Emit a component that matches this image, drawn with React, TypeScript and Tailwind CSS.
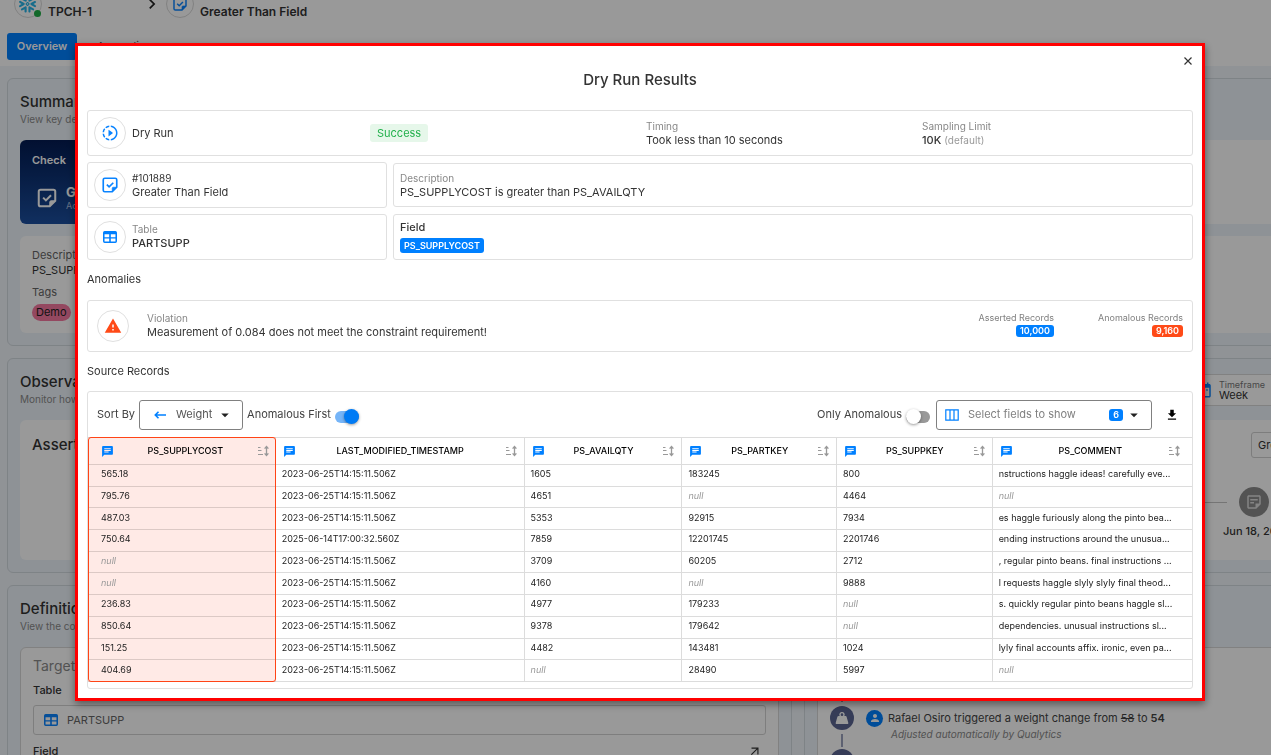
import type { ReactNode } from "react";
import {
  MdArrowDropDown,
  MdArrowOutward,
  MdChat,
  MdChevronRight,
  MdDateRange,
  MdDownload,
  MdOutlineStickyNote2,
  MdPerson,
  MdSlowMotionVideo,
  MdWarning,
} from "react-icons/md";
import { SiSnowflake } from "react-icons/si";

const columns = [
  { name: "PS_SUPPLYCOST", width: "w-[17%]" },
  { name: "LAST_MODIFIED_TIMESTAMP", width: "w-[22.5%]" },
  { name: "PS_AVAILQTY", width: "w-[14.3%]" },
  { name: "PS_PARTKEY", width: "w-[14%]" },
  { name: "PS_SUPPKEY", width: "w-[14.1%]" },
  { name: "PS_COMMENT", width: "" },
];

const stamp = "2023-06-25T14:15:11.506Z";

const rows: (string | null)[][] = [
  ["565.18", stamp, "1605", "183245", "800", "nstructions haggle ideas! carefully eve..."],
  ["795.76", stamp, "4651", null, "4464", null],
  ["487.03", stamp, "5353", "92915", "7934", "es haggle furiously along the pinto bea..."],
  ["750.64", "2025-06-14T17:00:32.560Z", "7859", "12201745", "2201746", "ending instructions around the unusua..."],
  [null, stamp, "3709", "60205", "2712", ", regular pinto beans. final instructions ..."],
  [null, stamp, "4160", null, "9888", "l requests haggle slyly slyly final theod..."],
  ["236.83", stamp, "4977", "179233", null, "s. quickly regular pinto beans haggle sl..."],
  ["850.64", stamp, "9378", "179642", null, "dependencies. unusual instructions sl..."],
  ["151.25", stamp, "4482", "143481", "1024", "lyly final accounts affix. ironic, even pa..."],
  ["404.69", stamp, null, "28490", "5997", null],
];

function NoteCheckIcon({ className }: { className: string }) {
  return (
    <svg viewBox="0 0 24 24" className={className} fill="none" stroke="currentColor" strokeWidth="2.2" aria-hidden="true">
      <path d="M15 21H5a2 2 0 0 1-2-2V5a2 2 0 0 1 2-2h14a2 2 0 0 1 2 2v10z" />
      <path d="M21 15h-4.5a1.5 1.5 0 0 0-1.5 1.5V21z" fill="currentColor" strokeWidth="1" />
      <path d="M7.8 11.6l3 3 5.6-5.6" />
    </svg>
  );
}

function TableIcon({ className }: { className: string }) {
  return (
    <svg viewBox="0 0 24 24" className={className} fill="currentColor" aria-hidden="true">
      <path
        fillRule="evenodd"
        d="M4 3h16a2.500 2.500 0 0 1 2.500 2.500v13A2.500 2.500 0 0 1 20 21H4a2.500 2.500 0 0 1-2.500-2.500v-13A2.500 2.500 0 0 1 4 3zM3.800 8v4.200h7V8zm9.400 0v4.200h7V8zm-9.400 6.400v4.200h7v-4.200zm9.400 0v4.200h7v-4.200z"
      />
    </svg>
  );
}

function SortIcon() {
  return (
    <svg viewBox="0 0 12 12" className="size-3" fill="none" stroke="currentColor" strokeWidth="1" aria-hidden="true">
      <path d="M1 2.500h2.500M1 5.500h3.500M1 9.500h5" strokeWidth="1.200" />
      <path d="M9.500 2v8M7.600 3.600L9.500 1.500l1.900 2.100M7.600 8.400l1.900 2.100 1.900-2.100" strokeWidth="1.300" />
    </svg>
  );
}

function ColumnsIcon() {
  return (
    <svg viewBox="0 0 14 12" className="h-3 w-3.5 shrink-0 text-[#0080ff]" fill="none" stroke="currentColor" strokeWidth="1.2" aria-hidden="true">
      <path d="M.8.8h12.4v10.4H.8zM5 .8v10.4M9 .8v10.4" />
    </svg>
  );
}

function WeightIcon({ className }: { className: string }) {
  return (
    <svg viewBox="0 0 24 24" className={className} fill="currentColor" aria-hidden="true">
      <path
        fillRule="evenodd"
        d="M12 3a4 4 0 0 1 3.500 6H17c1 0 1.800.6 2 1.500l2.400 8.500c.4 1.200-.4 2-1.400 2H4c-1 0-1.800-.8-1.400-2L5 10.500C5.200 9.600 6 9 7 9h1.500A4 4 0 0 1 12 3zm0 2a2 2 0 1 0 0 4 2 2 0 0 0 0-4z"
      />
    </svg>
  );
}

function RoundIcon({ children }: { children: ReactNode }) {
  return (
    <span className="flex size-8 shrink-0 items-center justify-center rounded-full border border-[#e0e0e0] bg-white">
      {children}
    </span>
  );
}

function Card({ className, children }: { className: string; children: ReactNode }) {
  return <div className={`rounded-[3px] border border-[#e0e0e0] ${className}`}>{children}</div>;
}

function Labelled({ label, children }: { label: string; children: ReactNode }) {
  return (
    <div className="flex flex-col">
      <span className="text-[10px] leading-[14px] text-[#888]">{label}</span>
      <span className="text-[11px] leading-[14px] text-[#333]">{children}</span>
    </div>
  );
}

function Toggle({ id, label, on }: { id: string; label: string; on?: boolean }) {
  return (
    <div className="flex items-center gap-1">
      <label htmlFor={id} className="text-[11px] text-[#424242]">{label}</label>
      <input
        id={id}
        type="checkbox"
        defaultChecked={on}
        className="relative mt-1 h-4 w-6 appearance-none before:absolute before:inset-x-0 before:top-0.5 before:h-3 before:rounded-full before:bg-[#999] after:absolute after:top-0 after:left-0 after:size-[15px] after:rounded-full after:bg-white after:shadow-[0_1px_3px_rgba(0,0,0,0.4)] checked:before:bg-[#76b5f8] checked:after:left-[9px] checked:after:bg-[#007bf5]"
      />
    </div>
  );
}

function BackPanel({ title, hint, children, aside }: { title?: string; hint?: string; children: ReactNode; aside?: ReactNode }) {
  return (
    <section className="rounded-md border border-[#d3dae0] bg-[#edf4fa] px-3 pb-3">
      <div className="flex h-[61px] items-center justify-between">
        <div>
          {title && <h2 className="text-[15px] leading-[18px] font-medium text-[#333]">{title}</h2>}
          {hint && <p className="text-[10px] leading-4 text-[#8a8a8a]">{hint}</p>}
        </div>
        {aside}
      </div>
      {children}
    </section>
  );
}

function Backdrop() {
  return (
    <div className="-mr-12 bg-[#f0f5fa]">
      <header className="relative bg-white">
        <span className="absolute -top-2 -left-1 h-2.5 w-3 rounded-b-full bg-[#0080ff]" />
        <div className="-mt-3 flex h-8 items-center">
          <div className="flex items-center gap-1.5 pl-3.5">
            <span className="relative flex size-7 items-center justify-center rounded-full border border-[#d8d8d8]">
              <SiSnowflake className="size-[18px] text-[#29b5e8]" />
              <span className="absolute right-0 bottom-0 size-[7px] rounded-full bg-[#1fae45]" />
            </span>
            <span className="pt-4 text-[12px] font-semibold text-[#333]">TPCH-1</span>
          </div>
          <MdChevronRight className="mr-1 ml-[50px] size-5 text-[#222]" />
          <div className="flex items-center gap-1.5">
            <span className="flex size-7 items-center justify-center rounded-full border border-[#d8d8d8]">
              <NoteCheckIcon className="size-4 text-[#0a84ff]" />
            </span>
            <span className="pt-4 text-[12px] font-semibold text-[#333]">Greater Than Field</span>
          </div>
        </div>
        <nav className="flex pt-[13px] pb-1.5 pl-[7px] text-[11px] font-semibold">
          <button type="button" className="h-[27px] w-[70px] rounded-[3px] bg-[#0080ff] text-white">Overview</button>
          <button type="button" className="h-[27px] px-5 font-normal text-[#555]">Anomalies</button>
        </nav>
      </header>

      <main className="flex flex-col gap-3 py-3 pl-[7px] text-[#333]">
        <BackPanel title="Summary" hint="View key details">
          <div className="grid grid-cols-[280px_1fr] gap-3">
            <div className="flex h-[84px] flex-col justify-between rounded-md bg-linear-to-b from-[#041b52] to-[#1c4f9f] px-3 py-3 text-white">
              <span className="text-[11px] font-semibold">Check</span>
              <div className="flex items-center gap-2 pl-1">
                <NoteCheckIcon className="size-[22px]" />
                <div className="flex flex-col">
                  <span className="text-[13px] leading-4 font-bold">Greater Than</span>
                  <span className="text-[9px] leading-3 text-[#a9bedd]">Active</span>
                </div>
              </div>
            </div>
            <div className="rounded-md bg-white" />
            <div className="col-span-2 flex h-[97px] flex-col rounded-md bg-white px-3 pt-3 text-[11px] leading-[15px]">
              <span className="text-[#666]">Description</span>
              <span>PS_SUPPLYCOST</span>
              <span className="pt-[7px] text-[#666]">Tags</span>
              <span className="mt-1 w-fit rounded-full bg-[#f778a1] px-1 leading-[17px] text-[#222]">Demo</span>
            </div>
          </div>
        </BackPanel>

        <BackPanel
          title="Observability"
          hint="Monitor how"
          aside={
            <div className="flex h-8 w-28 items-center gap-1.5 rounded-sm border border-[#d8d8d8] bg-white">
              <MdDateRange className="size-[18px] text-[#0a84ff]" />
              <div className="flex flex-col">
                <span className="text-[9px] leading-2.5 text-[#777]">Timeframe</span>
                <span className="text-[11px] leading-2.5">Week</span>
              </div>
            </div>
          }
        >
          <div className="flex h-[140px] justify-between overflow-hidden rounded-md bg-white px-3 pt-3">
            <h3 className="pt-0.5 text-[15px] font-medium">Assertions</h3>
            <div className="flex w-[91px] flex-col">
              <div className="ml-12 h-[26px] rounded-[3px] border border-[#d0d0d0] px-1.5 text-[11px] leading-6">Group</div>
              <div className="mt-[29px] flex items-center gap-3">
                <span className="h-px w-6 shrink-0 bg-[#c4c4c4]" />
                <span className="flex size-[30px] shrink-0 items-center justify-center rounded-full bg-[#8a8a8a] text-[#ddd]">
                  <MdOutlineStickyNote2 className="size-[18px]" />
                </span>
              </div>
              <span className="mt-1.5 ml-5 text-[11px] font-medium whitespace-nowrap">Jun 18, 2025</span>
            </div>
          </div>
        </BackPanel>

        <div className="flex gap-3">
          <div className="w-[785px] shrink-0">
            <BackPanel title="Definition" hint="View the config">
              <div className="h-[180px] rounded-md border border-[#d8d8d8] bg-white px-3 pt-2">
                <h3 className="text-[14px] leading-5 text-[#8a8a8a]">Target</h3>
                <div className="mt-[7px] text-[11px] leading-[14px] font-medium">Table</div>
                <div className="mt-2 flex h-[30px] items-center gap-2 rounded-[3px] border border-[#d3d3d3] px-[9px] text-[11px] text-[#666]">
                  <TableIcon className="size-4 text-[#0a84ff]" />
                  PARTSUPP
                </div>
                <div className="mt-[9px] flex items-center justify-between text-[11px] leading-[14px] font-medium">
                  Field
                  <MdArrowOutward className="mr-1 size-3.5" />
                </div>
              </div>
            </BackPanel>
          </div>
          <div className="grow">
            <BackPanel>
              <div className="h-[180px] overflow-hidden rounded-md border border-[#d8d8d8] bg-white px-3">
                <div className="flex flex-col">
                  <span className="ml-[11px] h-[54px] w-0.5 bg-[#9ca2bd]" />
                  <div className="mt-1 flex items-center">
                    <span className="flex size-6 items-center justify-center rounded-full bg-[#5b6592] text-white">
                      <WeightIcon className="size-4" />
                    </span>
                    <span className="ml-3 flex size-[17px] items-center justify-center rounded-full bg-[#0080ff] text-white">
                      <MdPerson className="size-3" />
                    </span>
                    <span className="ml-[5px] text-[11px] leading-[14px] whitespace-nowrap text-[#444]">
                      Rafael Osiro triggered a weight change from <s>58</s> to <b className="font-semibold">54</b>
                    </span>
                  </div>
                  <div className="flex">
                    <span className="mt-1 ml-[11px] h-[13px] w-0.5 bg-[#9ca2bd]" />
                    <em className="-mt-0.5 ml-12 text-[10px] leading-3 text-[#888]">Adjusted automatically by Qualytics</em>
                  </div>
                  <span className="mt-0.5 size-6 rounded-full bg-[#5b6592]" />
                </div>
              </div>
            </BackPanel>
          </div>
        </div>
      </main>
    </div>
  );
}

function RecordsTable() {
  return (
    <div className="relative">
      <table className="h-[245px] w-full table-fixed border-collapse text-left text-[9px] text-[#222]">
        <colgroup>
          {columns.map((c) => (
            <col key={c.name} className={c.width} />
          ))}
        </colgroup>
        <thead>
          <tr className="h-[27px]">
            {columns.map((c, i) => (
              <th
                key={c.name}
                className={
                  i === 0
                    ? "border-y border-[#dcc9c5] bg-[#ffeae6] pr-[7px] pl-[13px] font-medium"
                    : "border-y border-r border-[#dcdcdc] pr-[7px] pl-[7px] font-medium last:border-r-0 last:pr-3"
                }
              >
                <div className="flex items-center justify-between text-black">
                  <MdChat className="size-[13px] shrink-0 text-[#0080ff]" />
                  <span>{c.name}</span>
                  <button type="button" aria-label={`Sort by ${c.name}`} className="text-[#999]">
                    <SortIcon />
                  </button>
                </div>
              </th>
            ))}
          </tr>
        </thead>
        <tbody>
          {rows.map((r, ri) => (
            <tr key={ri}>
              {r.map((v, i) => (
                <td
                  key={i}
                  className={
                    i === 0
                      ? "border-b border-[#dcc9c5] bg-[#ffeae6] pt-0 pb-0.5 pl-[13px] leading-4"
                      : "border-r border-b border-[#dcdcdc] pt-0 pb-0.5 pl-1.5 leading-4 whitespace-nowrap last:border-r-0"
                  }
                >
                  {v ?? <em className="text-[#999]">null</em>}
                </td>
              ))}
            </tr>
          ))}
        </tbody>
      </table>
      <div className="pointer-events-none absolute inset-y-0 left-0 w-[17%] rounded-[3px] border border-[#ff4416]" />
    </div>
  );
}

function DryRunDialog() {
  return (
    <div
      role="dialog"
      aria-modal="true"
      aria-labelledby="dialog-title"
      className="relative flex w-full flex-col border-[3px] border-[#ff0000] bg-white px-[9px] pb-[9px] text-[#333] shadow-[0_3px_8px_rgba(0,0,0,0.45)]"
    >
      <button type="button" aria-label="Close" className="absolute top-[7px] right-1.5 flex size-4 items-center justify-center">
        <svg viewBox="0 0 8 8" className="size-2" stroke="#333" strokeWidth="1.2" aria-hidden="true">
          <path d="M.5.5l7 7M7.5.5l-7 7" />
        </svg>
      </button>
      <h1 id="dialog-title" className="pt-[23px] pb-5 text-center text-[15px] leading-[21px] font-medium">Dry Run Results</h1>

      <div className="flex flex-col gap-1.5">
        <Card className="grid h-[46px] grid-cols-4 items-center">
          <div className="flex items-center gap-1.5 pl-1.5 text-[11px]">
            <RoundIcon>
              <MdSlowMotionVideo className="size-[18px] text-[#0a84ff]" />
            </RoundIcon>
            Dry Run
          </div>
          <div className="pl-1.5">
            <span className="block w-fit rounded-[3px] bg-[#e6f7ea] px-[7px] text-[11px] leading-[18px] text-[#22b14c]">Success</span>
          </div>
          <div className="pl-1.5">
            <Labelled label="Timing">Took less than 10 seconds</Labelled>
          </div>
          <div className="pl-1.5">
            <Labelled label="Sampling Limit">
              <span className="font-medium">10K</span> <span className="text-[10px] text-[#999]">(default)</span>
            </Labelled>
          </div>
        </Card>
        <div className="flex items-center gap-1.5">
          <Card className="flex h-[46px] w-[300px] shrink-0 items-center gap-1.5 pl-1.5">
            <RoundIcon>
              <NoteCheckIcon className="size-[18px] text-[#0a84ff]" />
            </RoundIcon>
            <div className="flex flex-col">
              <span className="text-[10px] leading-[14px]">#101889</span>
              <span className="text-[11px] leading-[14px]">Greater Than Field</span>
            </div>
          </Card>
          <Card className="flex h-11 grow items-center pl-1.5">
            <Labelled label="Description">PS_SUPPLYCOST is greater than PS_AVAILQTY</Labelled>
          </Card>
        </div>
        <div className="flex items-center gap-1.5">
          <Card className="flex h-[46px] w-[300px] shrink-0 items-center gap-1.5 pl-1.5">
            <RoundIcon>
              <TableIcon className="size-4 text-[#0080ff]" />
            </RoundIcon>
            <div className="pb-0.5">
              <Labelled label="Table">
                <span className="font-medium">PARTSUPP</span>
              </Labelled>
            </div>
          </Card>
          <Card className="flex h-[46px] grow flex-col justify-center gap-1 pb-0.5 pl-1.5">
            <span className="text-[11px] leading-[14px] font-medium">Field</span>
            <span className="w-fit rounded-[3px] bg-[#0080ff] px-1 text-[9px] leading-[15px] font-semibold text-white">PS_SUPPLYCOST</span>
          </Card>
        </div>
      </div>

      <h2 className="pt-3 text-[11px] leading-[14px]">Anomalies</h2>
      <Card className="mt-3.5 flex h-[52px] items-center gap-[18px] px-[9px]">
        <RoundIcon>
          <MdWarning className="size-[18px] text-[#ff4a17]" />
        </RoundIcon>
        <div className="pb-0.5">
          <Labelled label="Violation">Measurement of 0.084 does not meet the constraint requirement!</Labelled>
        </div>
        <div className="ml-auto flex gap-11 pb-1.5 text-[9px] leading-[15px] text-[#808080]">
          <div className="flex flex-col items-end">
            Asserted Records
            <span className="rounded-[3px] bg-[#0080ff] px-1 leading-3 font-semibold text-white">10,000</span>
          </div>
          <div className="flex flex-col items-end">
            Anomalous Records
            <span className="rounded-[3px] bg-[#ff4a17] px-1 leading-3 font-semibold text-white">9,160</span>
          </div>
        </div>
      </Card>

      <h2 className="pt-3 text-[11px] leading-[14px]">Source Records</h2>
      <Card className="mt-[13px] pb-1.5">
        <div className="flex h-[45px] items-center justify-between pr-1.5 pl-[9px]">
          <div className="flex items-center gap-1">
            <label htmlFor="sort-by" className="text-[11px] text-[#424242]">Sort By</label>
            <div className="flex h-[30px] w-[104px] items-center rounded-[3px] border border-[#808080] pr-2 pl-3.5">
              <svg viewBox="0 0 12 8" className="h-2 w-3 shrink-0" fill="none" stroke="#0080ff" strokeWidth="1.6" aria-hidden="true">
                <path d="M12 4H1.5M4.5.8L1.3 4l3.2 3.2" />
              </svg>
              <select id="sort-by" className="ml-2.5 grow appearance-none text-[11px] text-[#555]">
                <option>Weight</option>
              </select>
              <MdArrowDropDown className="size-[18px] shrink-0 text-[#222]" />
            </div>
            <Toggle id="anomalous-first" label="Anomalous First" on />
          </div>
          <div className="flex items-center gap-1.5">
            <Toggle id="only-anomalous" label="Only Anomalous" />
            <div className="flex h-[30px] w-[216px] items-center rounded-[3px] border border-[#808080] px-2">
              <ColumnsIcon />
              <select aria-label="Select fields to show" className="ml-[9px] grow appearance-none text-[11px] text-[#808080]">
                <option>Select fields to show</option>
              </select>
              <span className="rounded-[3px] bg-[#0080ff] px-1 text-[9px] leading-3 font-semibold text-white">6</span>
              <MdArrowDropDown className="ml-0.5 size-[18px] shrink-0 text-[#222]" />
            </div>
            <button type="button" aria-label="Download" className="flex size-7 items-center justify-center text-black">
              <MdDownload className="size-3.5" />
            </button>
          </div>
        </div>
        <RecordsTable />
      </Card>
    </div>
  );
}

export default function App() {
  return (
    <div className="h-screen overflow-hidden font-['Inter',sans-serif]">
      <Backdrop />
      <div className="fixed inset-0 flex items-start bg-black/40 pt-[43px] pr-[66px] pl-[75px]">
        <DryRunDialog />
      </div>
    </div>
  );
}
